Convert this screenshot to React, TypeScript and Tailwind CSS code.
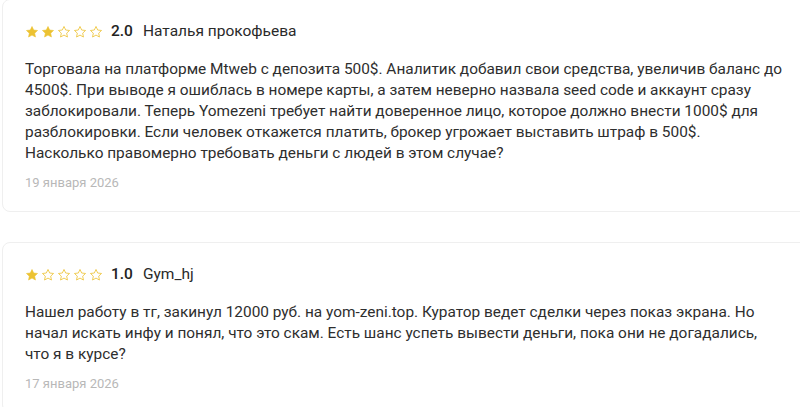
import React from "react";

type Review = {
  rating: number;
  author: string;
  lines: string[];
  date: string;
};

// the source wraps at these points, kept as explicit lines
const reviews: Review[] = [
  {
    rating: 2,
    author: "Наталья прокофьева",
    lines: [
      "Торговала на платформе Mtweb с депозита 500$. Аналитик добавил свои средства, увеличив баланс до",
      "4500$. При выводе я ошиблась в номере карты, а затем неверно назвала seed code и аккаунт сразу",
      "заблокировали. Теперь Yomezeni требует найти доверенное лицо, которое должно внести 1000$ для",
      "разблокировки. Если человек откажется платить, брокер угрожает выставить штраф в 500$.",
      "Насколько правомерно требовать деньги с людей в этом случае?",
    ],
    date: "19 января 2026",
  },
  {
    rating: 1,
    author: "Gym_hj",
    lines: [
      "Нашел работу в тг, закинул 12000 руб. на yom-zeni.top. Куратор ведет сделки через показ экрана. Но",
      "начал искать инфу и понял, что это скам. Есть шанс успеть вывести деньги, пока они не догадались,",
      "что я в курсе?",
    ],
    date: "17 января 2026",
  },
];

const STAR = "M12 2.5l2.9 6.1 6.6.8-4.9 4.6 1.3 6.6L12 17.3l-5.9 3.3 1.3-6.6-4.9-4.6 6.6-.8z";

function Star({ filled }: { filled: boolean }) {
  return (
    <svg width="14" height="14" viewBox="0 0 24 24" className="shrink-0">
      <path
        d={STAR}
        fill={filled ? "#ecc232" : "none"}
        stroke="#ecc232"
        strokeWidth={filled ? 1 : 1.4}
        strokeLinejoin="round"
      />
    </svg>
  );
}

function ReviewCard({ review }: { review: Review }) {
  return (
    <div className="rounded-lg border border-[#efefef] bg-white pl-[22px] pr-[18px] pt-[22px] pb-[18px]">
      <div className="flex h-5 items-center">
        <div className="flex gap-[2px]">
          {[1, 2, 3, 4, 5].map((i) => (
            <Star key={i} filled={i <= review.rating} />
          ))}
        </div>
        <span className="ml-[8px] text-[15.5px] font-medium text-[#222]">
          {review.rating.toFixed(1)}
        </span>
        <span className="ml-[10px] text-[15.5px] text-[#2a2a2a]">{review.author}</span>
      </div>
      <p className="mt-[17px] text-[15.4px] leading-[21px] text-[#2e2e2e]">
        {review.lines.map((l, i) => (
          <span key={i} className="block whitespace-nowrap">
            {l}
          </span>
        ))}
      </p>
      <div className="mt-[9px] text-[13px] leading-[20px] text-[#b8b8b8]">{review.date}</div>
    </div>
  );
}

export default function App() {
  return (
    <div
      className="min-h-screen overflow-hidden bg-white pl-[2px] -mt-[1px]"
      style={{ fontFamily: "Roboto, 'Noto Sans', sans-serif" }}
    >
      <div className="-mr-4 flex flex-col gap-[30px]">
        {reviews.map((r, i) => (
          <ReviewCard key={i} review={r} />
        ))}
      </div>
    </div>
  );
}
